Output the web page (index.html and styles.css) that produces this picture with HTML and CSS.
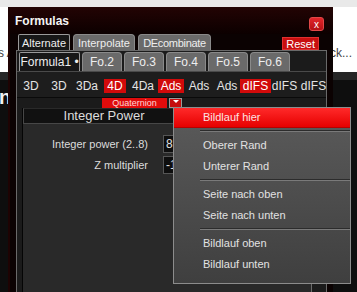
FILE: index.html
```html
<!DOCTYPE html>
<html lang="de">
<head>
  <meta charset="UTF-8">
  <title>Formulas</title>
  <link rel="stylesheet" href="styles.css">
</head>
<body>

  <div class="page">
    <div class="page-top"></div>
    <div class="page-band">
      <span class="band-left">s A</span>
      <span class="band-right">ck...</span>
    </div>
    <div class="page-dark">
      <span class="dark-title">nt</span>
    </div>
  </div>

  <div class="window">
    <div class="titlebar">
      <h1>Formulas</h1>
      <button class="close">x</button>
    </div>

    <div class="tabs-main">
      <span class="tab active t-alt">Alternate</span>
      <span class="tab t-int">Interpolate</span>
      <span class="tab t-dec">DEcombinate</span>
      <button class="reset">Reset</button>
    </div>

    <div class="pane-outer">
      <div class="tabs-formula">
        <span class="tab active wide">Formula1 •</span>
        <span class="tab">Fo.2</span>
        <span class="tab">Fo.3</span>
        <span class="tab">Fo.4</span>
        <span class="tab">Fo.5</span>
        <span class="tab">Fo.6</span>
      </div>

      <div class="formula-bar">
        <span class="cell"><span class="fbtn">3D</span></span>
        <span class="cell"><span class="fbtn">3D</span></span>
        <span class="cell"><span class="fbtn">3Da</span></span>
        <span class="cell"><span class="fbtn on">4D</span></span>
        <span class="cell"><span class="fbtn">4Da</span></span>
        <span class="cell"><span class="fbtn on">Ads</span></span>
        <span class="cell"><span class="fbtn">Ads</span></span>
        <span class="cell"><span class="fbtn">Ads</span></span>
        <span class="cell ifs"><span class="fbtn on">dIFS</span></span>
        <span class="cell ifs"><span class="fbtn">dIFS</span></span>
        <span class="cell ifs"><span class="fbtn">dIFS</span></span>
      </div>

      <div class="pane-inner">
        <div class="section-head">Integer Power</div>
        <div class="params">
          <label for="power">Integer power (2..8)</label>
          <input id="power" type="text" value="8">
          <label for="zmul">Z multiplier</label>
          <input id="zmul" type="text" value="-1">
        </div>
      </div>
    </div>

    <div class="formula-pick">
      <span class="pick-name">Quaternion</span>
      <span class="pick-arrow"></span>
    </div>
  </div>

  <ul class="context-menu">
    <li class="item hot">Bildlauf hier</li>
    <li class="sep"></li>
    <li class="item">Oberer Rand</li>
    <li class="item">Unterer Rand</li>
    <li class="sep"></li>
    <li class="item">Seite nach oben</li>
    <li class="item">Seite nach unten</li>
    <li class="sep"></li>
    <li class="item">Bildlauf oben</li>
    <li class="item">Bildlauf unten</li>
  </ul>

</body>
</html>
```

FILE: styles.css
```css
body {
  margin: 0;
  width: 357px;
  height: 292px;
  overflow: hidden;
  font-family: "Liberation Sans", Arial, sans-serif;
  background-color: #111;
}

/* page behind the window */
.page-top {
  height: 7px;
  background-color: #e9e9e9;
}
.page-band {
  height: 65px;
  background-color: #fff;
  display: flex;
  justify-content: space-between;
  align-items: flex-start;
  padding-top: 39px;
  box-sizing: border-box;
  font-size: 12px;
  color: #444;
}
.band-left {
  margin-left: -2px;
}
.band-right {
  margin-right: 5px;
}
.page-dark {
  height: 220px;
  background: linear-gradient(#262626 0, #262626 8px, #0e0e0e 8px);
  padding-top: 14px;
  box-sizing: border-box;
}
.dark-title {
  display: block;
  margin-left: -1px;
  font-size: 20px;
  font-weight: bold;
  color: #f2f2f2;
}

/* the window */
.window {
  position: absolute;
  left: 8px;
  top: 7px;
  width: 325px;
  height: 285px;
  overflow: hidden;
  background-color: #0b0202;
  border-left: 2px solid #1e0303;
  box-sizing: border-box;
}
.titlebar {
  height: 27px;
  display: flex;
  align-items: center;
  justify-content: space-between;
  padding: 0 9px 0 5px;
  background: linear-gradient(#230404, #0c0000);
}
.titlebar h1 {
  margin: 0;
  font-size: 12px;
  font-weight: bold;
  color: #f4f4f4;
}
.close {
  align-self: flex-start;
  width: 15px;
  height: 14px;
  margin-top: 10px;
  padding: 0;
  border: 1px solid #e04848;
  border-radius: 3px;
  background: linear-gradient(#e2262b, #b51015);
  color: #fff;
  font-family: "Liberation Sans", Arial, sans-serif;
  font-size: 10px;
  line-height: 11px;
}

.tab {
  height: 100%;
  box-sizing: border-box;
  padding: 0;
  border: 1px solid #8a8a8a;
  border-bottom: none;
  border-radius: 4px 4px 0 0;
  background-color: #6a6a6a;
  color: #eee;
  font-size: 11px;
  white-space: nowrap;
  display: flex;
  align-items: center;
  justify-content: center;
}
.tab.active {
  background-color: #171717;
  border-color: #9a9a9a;
  border-radius: 2px 2px 0 0;
}

.tabs-main {
  height: 16px;
  display: flex;
  gap: 3px;
  padding-left: 8px;
}
.t-alt {
  width: 52px;
}
.t-int {
  width: 62px;
}
.t-dec {
  width: 73px;
  letter-spacing: -0.3px;
}
.reset {
  margin-left: auto;
  margin-right: 14px;
  margin-top: 3px;
  height: 13px;
  padding: 0 3px;
  border: 1px solid #e03030;
  background-color: #c80f0f;
  color: #fff;
  font-family: "Liberation Sans", Arial, sans-serif;
  font-size: 11px;
  line-height: 10px;
}

.pane-outer {
  margin-left: 6px;
  width: 311px;
  height: 260px;
  box-sizing: border-box;
  border: 1px solid #6a6a6a;
  background-color: #1b1b1b;
  padding-top: 1px;
}
.tabs-formula {
  height: 19px;
  display: flex;
  gap: 2px;
  padding-left: 2px;
}
.tabs-formula .tab {
  width: 40px;
  font-size: 12px;
}
.tabs-formula .tab.wide {
  width: 61px;
}

.formula-bar {
  height: 25px;
  display: flex;
  overflow: hidden;
  border-top: 1px solid #4a4a4a;
  border-bottom: 1px solid #0a0a0a;
  background-color: #1d1d1d;
}
.cell {
  flex: none;
  width: 28px;
  display: flex;
  align-items: center;
  justify-content: center;
  padding-top: 2px;
  white-space: nowrap;
}
.cell.ifs {
  width: 29px;
}
.fbtn {
  font-size: 12px;
  line-height: 14px;
  color: #e4e4e4;
}
.fbtn.on {
  padding: 0 3px;
  background-color: #d20a0a;
  color: #fff;
}

.pane-inner {
  margin: 10px 0 0 5px;
  width: 290px;
  height: 200px;
  box-sizing: border-box;
  border-left: 1px solid #050505;
  border-right: 1px solid #6a6a6a;
  background-color: #292929;
}
.section-head {
  width: 162px;
  height: 16px;
  box-sizing: border-box;
  border: 1px solid #474747;
  border-top-color: #2a2a2a;
  background-color: #111;
  color: #dcdcdc;
  font-size: 13px;
  line-height: 14px;
  text-align: center;
}
.params {
  display: grid;
  grid-template-columns: 125px 60px;
  column-gap: 15px;
  row-gap: 3px;
  padding-top: 11px;
  align-items: center;
}
.params label {
  text-align: right;
  font-size: 11px;
  color: #dcdcdc;
}
.params input {
  height: 18px;
  box-sizing: border-box;
  border: 1px solid #555;
  background-color: #0e0e0e;
  color: #e0e0e0;
  font-family: "Liberation Sans", Arial, sans-serif;
  font-size: 12px;
  padding: 0 2px;
}

/* formula picker dropdown over the bar */
.formula-pick {
  position: absolute;
  left: 92px;
  top: 91px;
  display: flex;
  gap: 2px;
}
.pick-name {
  width: 65px;
  height: 10px;
  background-color: #e00c0c;
  color: #ffd6d6;
  font-size: 9px;
  line-height: 10px;
  text-align: center;
}
.pick-arrow {
  position: relative;
  width: 13px;
  height: 10px;
  box-sizing: border-box;
  border: 1px solid #9a9a9a;
  background-color: #c40d0d;
}
.pick-arrow::after {
  content: "";
  position: absolute;
  left: 3px;
  top: 1px;
  border-left: 3px solid transparent;
  border-right: 3px solid transparent;
  border-top: 3px solid #fff;
}

/* context menu */
.context-menu {
  position: absolute;
  left: 173px;
  top: 107px;
  width: 178px;
  height: 177px;
  box-sizing: border-box;
  margin: 0;
  padding: 0;
  list-style: none;
  border: 1px solid #8c8c8c;
  background: linear-gradient(#5b5b5b, #3f3f3f);
  font-size: 11px;
  color: #e2e2e2;
}
.item {
  height: 21px;
  line-height: 21px;
  padding-left: 29px;
}
.item.hot {
  height: 19px;
  line-height: 19px;
  background: linear-gradient(#ff2a2a, #e60000);
  border-bottom: 1px solid #b80000;
  color: #fbe4e4;
}
.sep {
  height: 7px;
  margin-left: 26px;
  box-sizing: border-box;
  padding-top: 2px;
}
.sep::before {
  content: "";
  display: block;
  height: 1px;
  background-color: #2c2c2c;
  border-bottom: 1px solid #7a7a7a;
}
```
